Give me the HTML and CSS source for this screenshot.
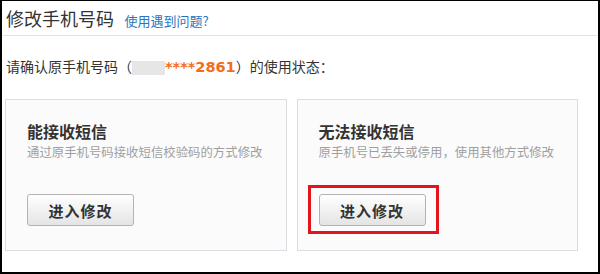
FILE: index.html
```html
<!DOCTYPE html>
<html lang="zh-CN">
<head>
<meta charset="utf-8">
<title>修改手机号码</title>
<link rel="stylesheet" href="styles.css">
</head>
<body>
<div class="frame">
  <div class="header">
    <span class="title">修改手机号码</span>
    <a class="help" href="#">使用遇到问题?</a>
  </div>
  <div class="content">
    <p class="intro">请确认原手机号码（<span class="blur"></span><span class="phone">****2861</span>）的使用状态：</p>
    <div class="cards">
      <div class="card">
        <div class="card-title">能接收短信</div>
        <div class="card-desc">通过原手机号码接收短信校验码的方式修改</div>
        <div class="btn-wrap"><button class="btn">进入修改</button></div>
      </div>
      <div class="card">
        <div class="card-title">无法接收短信</div>
        <div class="card-desc">原手机号已丢失或停用，使用其他方式修改</div>
        <div class="btn-wrap"><button class="btn">进入修改</button><span class="highlight"></span></div>
      </div>
    </div>
  </div>
</div>
</body>
</html>
```
FILE: styles.css
```css
html, body {
  margin: 0;
  padding: 0;
  background: #fff;
}
body {
  font-family: "Noto Sans CJK SC", "Liberation Sans", sans-serif;
  color: #333;
  text-spacing-trim: space-all;
}
.frame {
  width: 600px;
  height: 274px;
  box-sizing: border-box;
  border-style: solid;
  border-color: #000;
  border-width: 1px 2px 2px 2px;
  overflow: hidden;
}
.header {
  height: 34px;
  line-height: 34px;
  padding-left: 4px;
  border-bottom: 1px solid #e2e2e2;
  white-space: nowrap;
}
.title {
  font-size: 18px;
  color: #333;
}
.help {
  font-size: 13px;
  color: #2577c0;
  text-decoration: none;
  margin-left: 7px;
}
.content {
  padding: 0 20px 0 3px;
}
.intro {
  margin: 20px 0 23px 1px;
  font-size: 14px;
  line-height: 20px;
  height: 20px;
  white-space: nowrap;
  color: #333;
  font-feature-settings: "chws" 0, "halt" 0, "fwid" 1;
}
.blur {
  display: inline-block;
  width: 33px;
  height: 14px;
  background: #e6e6e6;
  vertical-align: -3px;
}
.phone {
  font-family: "DejaVu Sans", "Noto Sans CJK SC", sans-serif;
  font-feature-settings: normal;
  font-weight: bold;
  font-size: 14.5px;
  color: #f26c1c;
}
.cards {
  display: grid;
  grid-template-columns: 1fr 1fr;
  gap: 10px;
}
.card {
  height: 152px;
  box-sizing: border-box;
  border: 1px solid #dcdde2;
  background: #fbfbfb;
  padding: 21px 0 0 21px;
}
.card-title {
  font-size: 16px;
  font-weight: bold;
  line-height: 20px;
  color: #333;
}
.card-desc {
  margin-top: 2px;
  font-size: 12.4px;
  line-height: 18px;
  color: #a0a0a0;
  white-space: nowrap;
}
.btn-wrap {
  position: relative;
  display: inline-block;
  margin-top: 33px;
}
.btn {
  display: block;
  width: 107px;
  height: 32px;
  box-sizing: border-box;
  border: 1px solid #b3b3b3;
  border-radius: 3px;
  background: linear-gradient(#ffffff, #e4e4e4);
  font-family: "Noto Sans CJK SC", sans-serif;
  font-size: 15px;
  font-weight: bold;
  color: #333;
  letter-spacing: 1px;
  padding: 0;
}
.highlight {
  position: absolute;
  left: -11px;
  top: -9px;
  width: 131px;
  height: 49px;
  box-sizing: border-box;
  border: 3px solid #e3141c;
}
```
